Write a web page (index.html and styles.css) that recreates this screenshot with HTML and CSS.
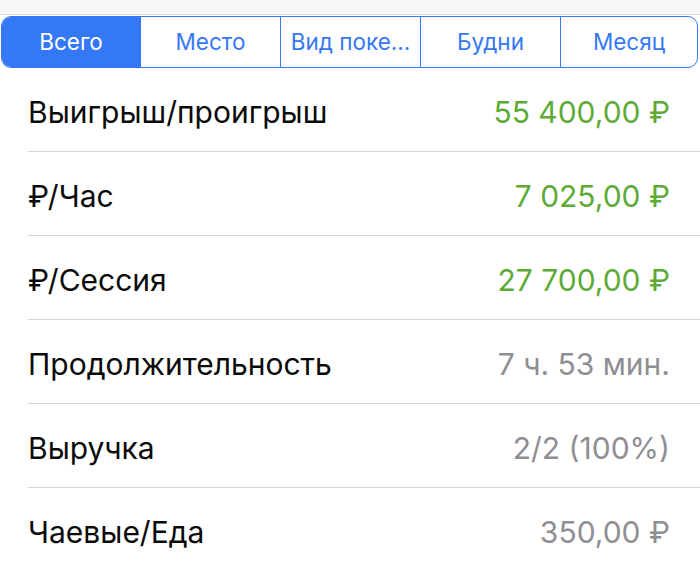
FILE: index.html
```html
<!DOCTYPE html>
<html lang="ru">
<head>
<meta charset="utf-8">
<link rel="stylesheet" href="styles.css">
</head>
<body>
<div class="topbar"></div>
<div class="seg">
  <div class="seg-item active">Всего</div>
  <div class="seg-item">Место</div>
  <div class="seg-item">Вид поке...</div>
  <div class="seg-item">Будни</div>
  <div class="seg-item">Месяц</div>
</div>
<ul class="list">
  <li class="row"><span class="label">Выигрыш/проигрыш</span><span class="value green">55 400,00 ₽</span></li>
  <li class="row"><span class="label">₽/Час</span><span class="value green">7 025,00 ₽</span></li>
  <li class="row"><span class="label">₽/Сессия</span><span class="value green">27 700,00 ₽</span></li>
  <li class="row"><span class="label">Продолжительность</span><span class="value grey">7 ч. 53 мин.</span></li>
  <li class="row"><span class="label">Выручка</span><span class="value grey">2/2 (100%)</span></li>
  <li class="row"><span class="label">Чаевые/Еда</span><span class="value grey">350,00 ₽</span></li>
</ul>
</body>
</html>
```
FILE: styles.css
```css
* { box-sizing: border-box; }
html, body {
  margin: 0;
  padding: 0;
  background: #ffffff;
  font-family: Inter, "Noto Sans", "DejaVu Sans", sans-serif;
  overflow: hidden;
}
.topbar {
  height: 15px;
  background: #f7f7f7;
  border-bottom: 1px solid #dcdcdc;
}
.seg {
  display: grid;
  grid-template-columns: 138px 140px 140px 140px 1fr;
  margin: 1px 2px 0 1px;
  height: 52px;
  border: 1.5px solid #3478f6;
  border-radius: 10px;
  overflow: hidden;
}
.seg-item {
  display: flex;
  align-items: center;
  justify-content: center;
  font-size: 22.5px;
  color: #3478f6;
  border-left: 1.5px solid #3478f6;
  white-space: nowrap;
  padding-bottom: 2px;
}
.seg-item:first-child { border-left: none; }
.seg-item.active {
  background: #3478f6;
  color: #ffffff;
}
.list {
  list-style: none;
  margin: 0;
  padding: 0 0 0 28px;
}
.row {
  display: flex;
  justify-content: space-between;
  align-items: center;
  height: 84px;
  padding-right: 30px;
  padding-top: 4px;
  border-bottom: 1px solid #d9d9d9;
  font-size: 30px;
}
.label { color: #0a0a0a; }
.value.green { color: #5dab36; }
.value.grey { color: #8e8e93; }
```
